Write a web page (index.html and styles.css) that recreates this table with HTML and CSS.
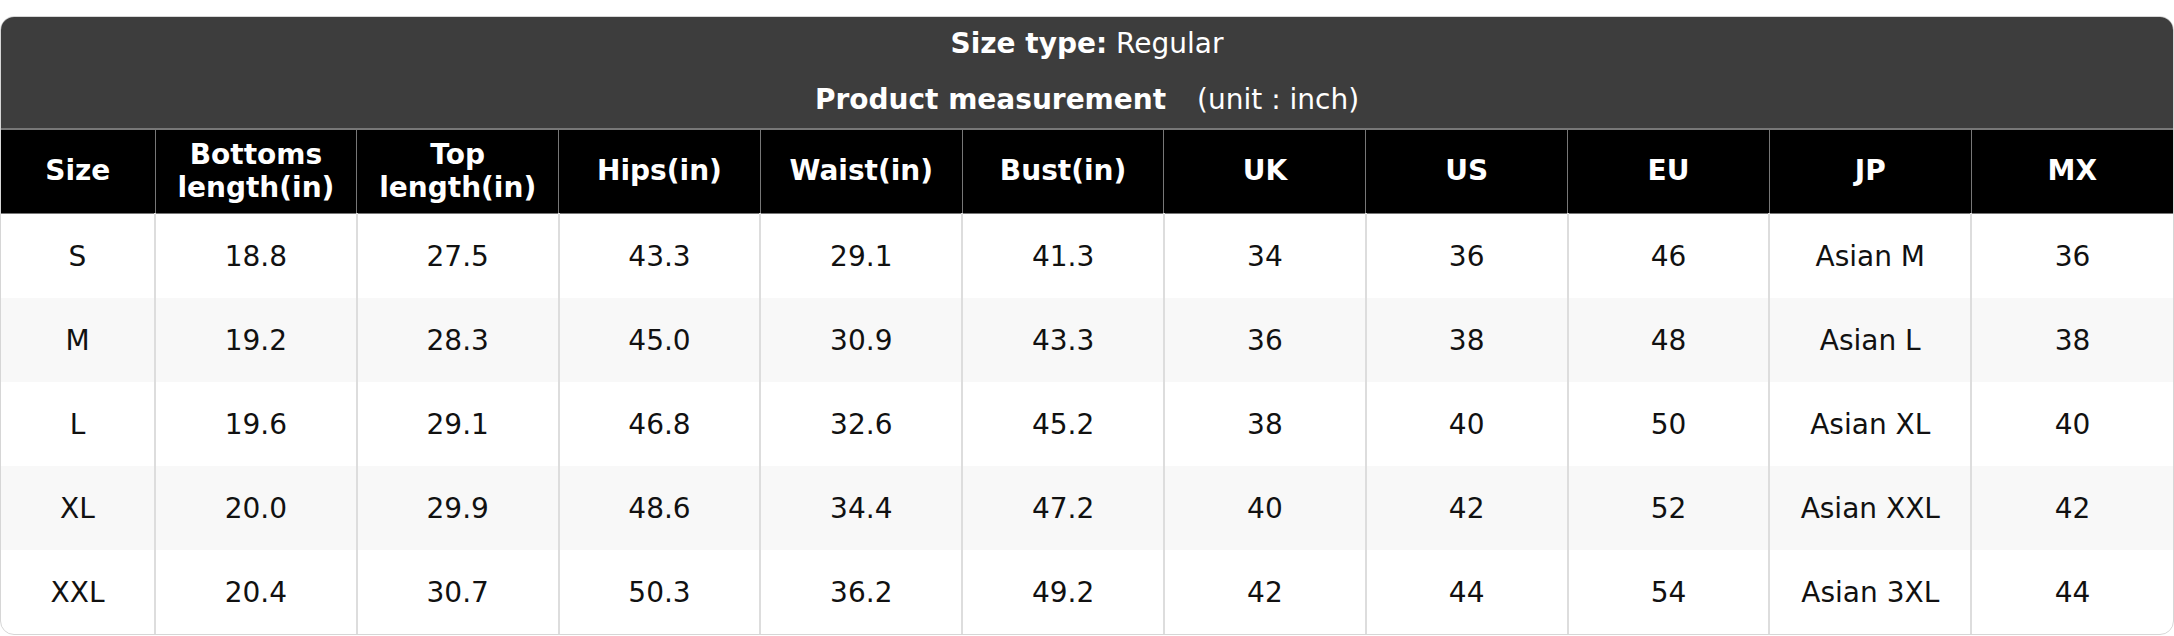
FILE: index.html
```html
<!DOCTYPE html>
<html lang="en">
<head>
<meta charset="utf-8">
<title>Size chart</title>
<link rel="stylesheet" href="styles.css">
</head>
<body>
<div class="chart">
  <div class="chart-title">
    <div class="title-line"><strong>Size type:</strong> Regular</div>
    <div class="title-line"><strong>Product measurement</strong><span class="unit">(unit : inch)</span></div>
  </div>
  <table class="size-table">
    <colgroup>
      <col class="col-size">
      <col><col><col><col><col><col><col><col><col><col>
    </colgroup>
    <thead>
      <tr>
        <th>Size</th>
        <th>Bottoms<br>length(in)</th>
        <th>Top<br>length(in)</th>
        <th>Hips(in)</th>
        <th>Waist(in)</th>
        <th>Bust(in)</th>
        <th>UK</th>
        <th>US</th>
        <th>EU</th>
        <th>JP</th>
        <th>MX</th>
      </tr>
    </thead>
    <tbody>
      <tr><td>S</td><td>18.8</td><td>27.5</td><td>43.3</td><td>29.1</td><td>41.3</td><td>34</td><td>36</td><td>46</td><td>Asian M</td><td>36</td></tr>
      <tr><td>M</td><td>19.2</td><td>28.3</td><td>45.0</td><td>30.9</td><td>43.3</td><td>36</td><td>38</td><td>48</td><td>Asian L</td><td>38</td></tr>
      <tr><td>L</td><td>19.6</td><td>29.1</td><td>46.8</td><td>32.6</td><td>45.2</td><td>38</td><td>40</td><td>50</td><td>Asian XL</td><td>40</td></tr>
      <tr><td>XL</td><td>20.0</td><td>29.9</td><td>48.6</td><td>34.4</td><td>47.2</td><td>40</td><td>42</td><td>52</td><td>Asian XXL</td><td>42</td></tr>
      <tr><td>XXL</td><td>20.4</td><td>30.7</td><td>50.3</td><td>36.2</td><td>49.2</td><td>42</td><td>44</td><td>54</td><td>Asian 3XL</td><td>44</td></tr>
    </tbody>
  </table>
</div>
</body>
</html>
```

FILE: styles.css
```css
html, body {
  margin: 0;
  padding: 0;
  background: #ffffff;
}

body {
  font-family: "DejaVu Sans", "Liberation Sans", sans-serif;
  font-size: 28px;
  color: #111111;
  padding-top: 16px;
}

.chart {
  border: 1px solid #d6d6d6;
  border-radius: 14px;
  overflow: hidden;
  background: #ffffff;
}

.chart-title {
  background: #3d3d3d;
  color: #ffffff;
  display: flex;
  flex-direction: column;
  align-items: center;
  gap: 16px;
  padding: 7px 0 8px;
}

.title-line {
  line-height: 40px;
  white-space: nowrap;
}

.title-line strong {
  font-weight: bold;
}

.unit {
  margin-left: 31px;
}

.size-table {
  width: 100%;
  border-collapse: collapse;
  table-layout: fixed;
}

.col-size {
  width: 154px;
}

.size-table th {
  background: #000000;
  color: #ffffff;
  font-weight: bold;
  line-height: 1.15;
  height: 83px;
  padding: 0;
  border: 1px solid #777777;
  border-top: 2px solid #777777;
  text-align: center;
  vertical-align: middle;
}

.size-table th:first-child,
.size-table td:first-child {
  border-left: none;
}

.size-table th:last-child,
.size-table td:last-child {
  border-right: none;
}

.size-table td {
  height: 84px;
  padding: 0;
  border-left: 2px solid #dddddd;
  border-right: 2px solid #dddddd;
  text-align: center;
  vertical-align: middle;
}

.size-table tbody tr:nth-child(even) td {
  background: #f8f8f8;
}
```
